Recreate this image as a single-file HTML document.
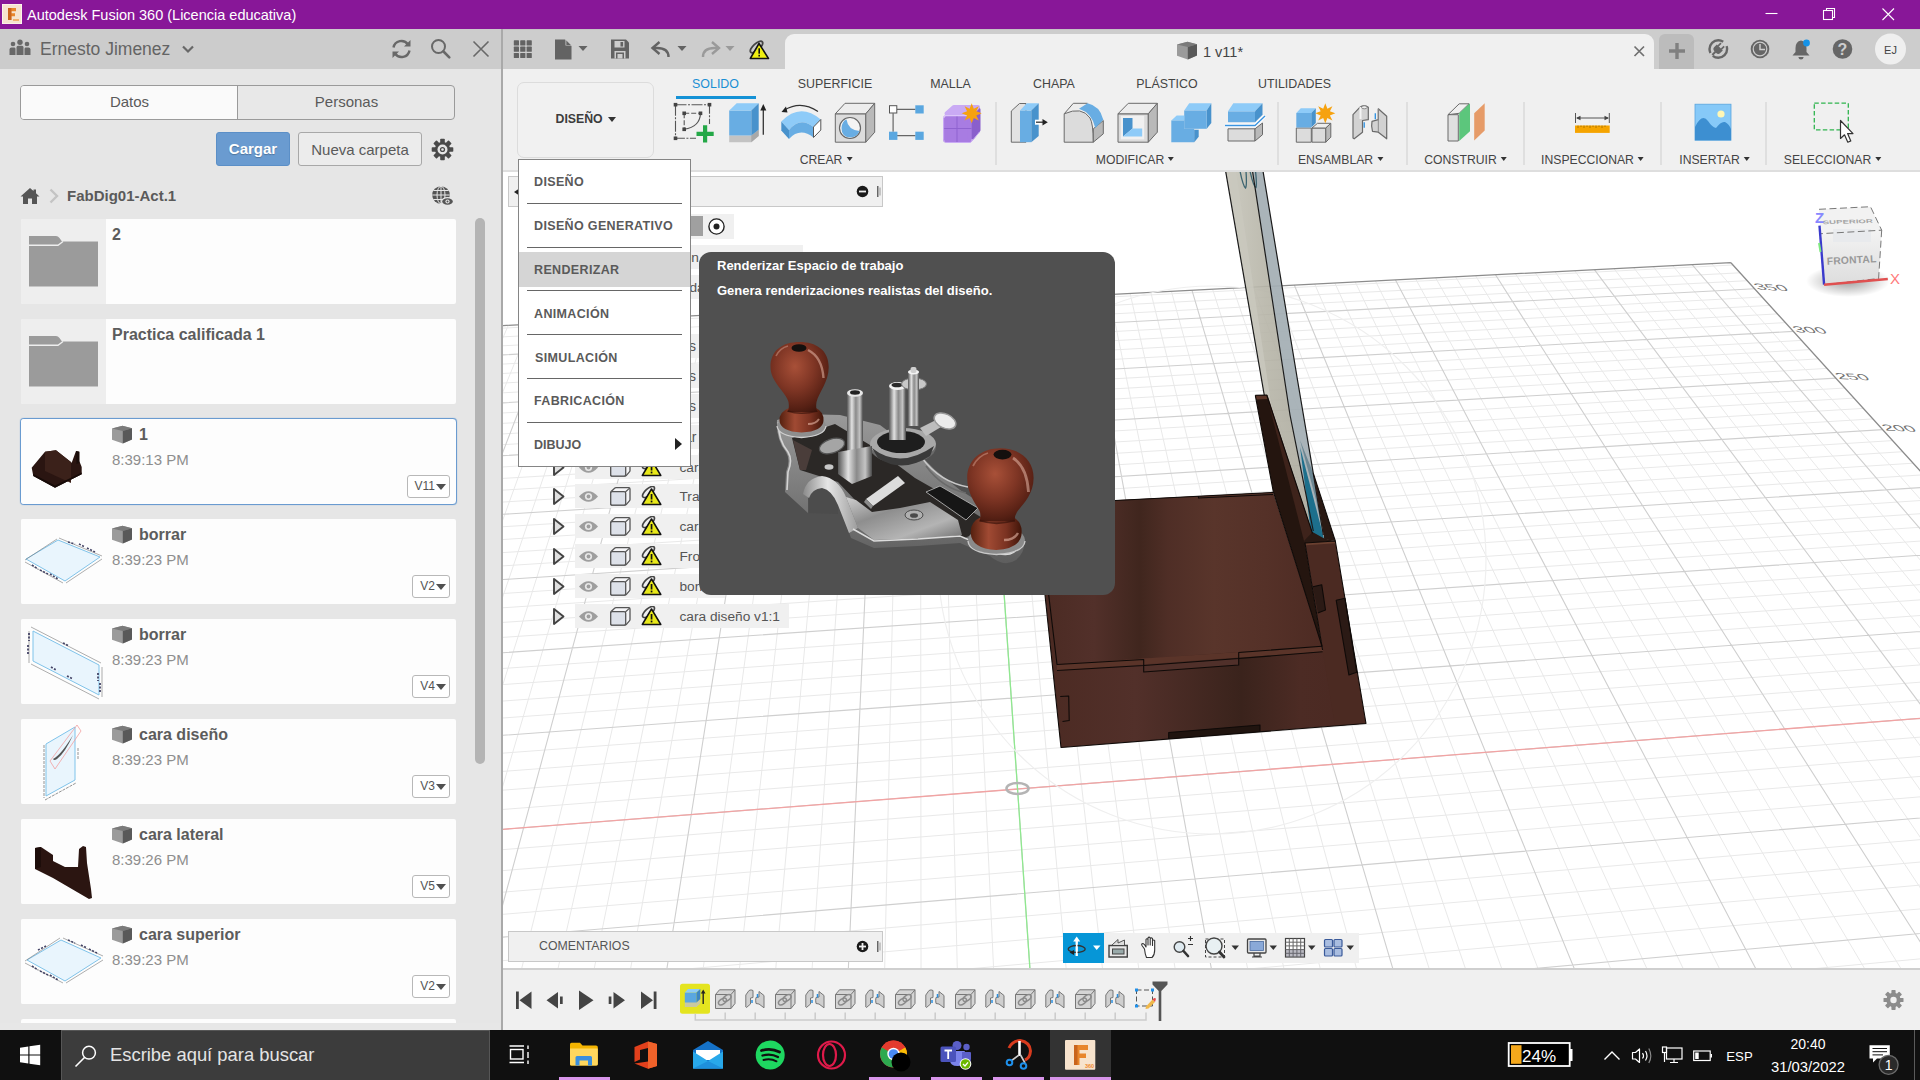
<!DOCTYPE html>
<html><head><meta charset="utf-8"><title>Autodesk Fusion 360</title>
<style>
*{box-sizing:border-box;margin:0;padding:0}
html,body{width:1920px;height:1080px;overflow:hidden;background:#fff;font-family:"Liberation Sans",sans-serif;}
.abs{position:absolute}
#root{position:relative;width:1920px;height:1080px;overflow:hidden;background:#fff}
.cx{display:inline-block;transform-origin:left center;white-space:nowrap}
/* title bar */
#title{left:0;top:0;width:1920px;height:29px;background:#881798;color:#fff}
#title .t{left:27px;top:6.500px;font-size:14.5px;white-space:nowrap;letter-spacing:0px}
/* left panel */
#lp{left:0;top:29px;width:503px;height:1001px;background:#e6e6e6;overflow:hidden}
#lph{left:0;top:0;width:501px;height:40px;background:#cccccc}
#lph .n{left:40px;top:10px;font-size:17.5px;color:#646464;white-space:nowrap}
#tabs{left:20px;top:56px;width:435px;height:35px;border:1px solid #9a9a9a;border-radius:4px;background:#e8e8e8;overflow:hidden}
#tabs .a{left:0;top:0;width:217px;height:33px;background:#fafafa;border-right:1px solid #9a9a9a}
#tabs span{position:absolute;top:7px;font-size:15px;color:#5a5a5a;text-align:center}
#bcarg{left:216px;top:103px;width:74px;height:34px;background:#6a9bd0;border:1px solid #5b8fc7;border-radius:3px;color:#fff;font-weight:bold;font-size:15px;text-align:center;line-height:32px;text-shadow:0 1px 1px rgba(0,0,0,.25)}
#bnew{left:298px;top:103px;width:124px;height:34px;background:#ececec;border:1px solid #a8a8a8;border-radius:3px;color:#5a5a5a;font-size:15px;text-align:center;line-height:33px}
#bc{left:67px;top:158px;font-size:15px;font-weight:bold;color:#5a5a5a;white-space:nowrap}
.it{position:absolute;left:21px;width:435px;height:85px;background:#fdfdfd;border-radius:2px;overflow:hidden}
.it .th{position:absolute;left:0;top:0;width:85px;height:85px;background:#fdfdfd}
.it.f .th{background:#eeeeee}
.it .nm{position:absolute;left:91px;top:7px;font-size:16px;font-weight:bold;color:#5c5c5c;white-space:nowrap}
.it .nm.c{left:118px}
.it .tm{position:absolute;left:91px;top:32px;font-size:15px;color:#8e8e8e;white-space:nowrap}
.it .v{position:absolute;right:6px;top:56px;height:23px;border:1px solid #b8b8b8;border-radius:3px;background:#fff;font-size:12px;color:#555;line-height:21px;padding:0 14px 0 7px}
.it .v:after{content:"";position:absolute;right:3px;top:8px;border-left:5px solid transparent;border-right:5px solid transparent;border-top:6.500px solid #505050}
.it .ci{position:absolute;left:90px;top:6px}
.it.sel{left:20px;width:437px;height:87px;border:1px solid #6a9bd0;border-radius:4px;box-shadow:0 0 1px #6a9bd0;background:#fdfdfd}
/* top strip */
#ts{left:503px;top:29px;width:1417px;height:40px;background:#cdcdcd}
#doctab{left:785px;top:34px;width:869px;height:35px;background:#f0f0f0;border-radius:9px 9px 0 0}
#rib{left:503px;top:69px;width:1417px;height:103px;background:#f0f0f0;border-bottom:2px solid #dedede}
.rt{position:absolute;top:76.500px;font-size:12.400px;color:#444;white-space:nowrap;transform:translateX(-50%)}
.rl{position:absolute;top:153px;font-size:12.200px;color:#444;white-space:nowrap;transform:translateX(-50%)}
.rl:after{content:"";display:inline-block;margin-left:4px;vertical-align:3px;border-left:3.5px solid transparent;border-right:3.5px solid transparent;border-top:4.5px solid #333}
.rs{position:absolute;top:102px;width:2px;height:63px;background:#dfdfdf}
#canvas{left:503px;top:172px;width:1417px;height:796px;background:#fff;overflow:hidden}
#tl{left:503px;top:968px;width:1417px;height:62px;background:#f0f0f0;border-top:2px solid #cfcfcf}
#tb{left:0;top:1030px;width:1920px;height:50px;background:#101010}
.mi{position:absolute;left:534px;height:16px;margin-top:-7.500px;line-height:16px;font-size:12.500px;font-weight:bold;color:#5a5a5a;white-space:nowrap;letter-spacing:.35px}
.ms{position:absolute;left:527px;width:155px;height:1px;background:#666}
</style></head><body><div id="root">
<!-- TITLE BAR -->
<div id="title" class="abs">
  <svg class="abs" style="left:2px;top:4px" width="20" height="20" viewBox="0 0 20 20"><rect x="0" y="0" width="20" height="20" rx="1" fill="#f6e3cf"/><rect x="0" y="0" width="20" height="20" rx="1" fill="none" stroke="#fff" stroke-width="1.2"/><path d="M6 4 H14 V7.2 H9.4 V9.3 H13 V12.2 H9.4 V16 H6 Z" fill="#e8862c"/><path d="M6 4 H9.4 V16 H6Z" fill="#c9641c"/><rect x="11" y="15" width="6" height="2" fill="#f0b070"/></svg>
  <div class="abs t">Autodesk Fusion 360 (Licencia educativa)</div>
  <svg class="abs" style="left:1750px;top:0" width="170" height="29" viewBox="0 0 170 29"><g stroke="#fff" stroke-width="1.1" fill="none"><path d="M15.500 13.500H27.500"/><rect x="73.500" y="10.500" width="9" height="9"/><path d="M76.500 10.500V8.500H84.500V17.500H82.500"/><path d="M132.500 8.500L144 20M144 8.500L132.500 20"/></g></svg>
</div>
<!-- LEFT PANEL -->
<div id="lp" class="abs">
  <div id="lph" class="abs">
    <svg class="abs" style="left:9px;top:10px" width="22" height="18" viewBox="0 0 22 18"><g fill="#686868"><circle cx="4" cy="5" r="2.300"/><circle cx="11" cy="3.200" r="2.700"/><circle cx="18" cy="5" r="2.300"/><path d="M0.500 16V10.500Q0.500 8.500 2.500 8.500H5.500Q6.500 8.500 6.500 10V16Z"/><path d="M7.500 16V8.500Q7.500 6.800 9 6.800H13Q14.500 6.800 14.500 8.500V16Z"/><path d="M15.500 16V10Q15.500 8.500 16.500 8.500H19.500Q21.500 8.500 21.500 10.500V16Z"/></g></svg>
    <div class="abs n">Ernesto Jimenez</div>
    <svg class="abs" style="left:181px;top:14px" width="14" height="12" viewBox="0 0 14 12"><path d="M2 3.500L7 8.500L12 3.500" fill="none" stroke="#686868" stroke-width="2.200"/></svg>
    <svg class="abs" style="left:390px;top:9px" width="23" height="22" viewBox="0 0 23 22"><g fill="none" stroke="#686868" stroke-width="2.400"><path d="M3.500 9.500A8 8 0 0 1 18 6.500"/><path d="M19.500 12.500A8 8 0 0 1 5 15.500"/></g><path d="M20.500 2V8.500H14Z" fill="#686868"/><path d="M2.500 20V13.500H9Z" fill="#686868"/></svg>
    <svg class="abs" style="left:429px;top:8px" width="24" height="24" viewBox="0 0 24 24"><circle cx="9.500" cy="9.500" r="6.500" fill="none" stroke="#686868" stroke-width="2"/><path d="M14.500 14.500L20.300 20.300" stroke="#686868" stroke-width="2.600" stroke-linecap="round"/></svg>
    <svg class="abs" style="left:472px;top:11px" width="18" height="18" viewBox="0 0 18 18"><path d="M1.500 1.500L16.500 16.500M16.500 1.500L1.500 16.500" stroke="#686868" stroke-width="1.600"/></svg>
  </div>
  <div id="tabs" class="abs"><div class="abs a"></div><span style="left:0;width:217px">Datos</span><span style="left:217px;width:217px">Personas</span></div>
  <div id="bcarg" class="abs">Cargar</div>
  <div id="bnew" class="abs">Nueva carpeta</div>
  <!-- gear -->
  <svg class="abs" style="left:431px;top:109px" width="23" height="23" viewBox="-11.500 -11.500 23 23"><g fill="#4a4a4a"><circle r="7.600"/><g id="gt"><rect x="-2.300" y="-10.800" width="4.600" height="5" rx="0.800"/></g><use href="#gt" transform="rotate(45)"/><use href="#gt" transform="rotate(90)"/><use href="#gt" transform="rotate(135)"/><use href="#gt" transform="rotate(180)"/><use href="#gt" transform="rotate(225)"/><use href="#gt" transform="rotate(270)"/><use href="#gt" transform="rotate(315)"/></g><circle r="5" fill="#e6e6e6"/><circle r="2.600" fill="#4a4a4a"/><circle r="1.300" fill="#e6e6e6"/></svg>
  <!-- breadcrumb -->
  <svg class="abs" style="left:20px;top:158px" width="20" height="18" viewBox="0 0 20 18"><path d="M10 1L0.500 9.500H3V17H8V11.500H12V17H17V9.500H19.500L16 6.300V2.500H13.500V4.100Z" fill="#555"/></svg>
  <svg class="abs" style="left:48px;top:159px" width="12" height="16" viewBox="0 0 12 16"><path d="M2.500 1.500L9 8L2.500 14.500" fill="none" stroke="#c4c4c4" stroke-width="2.400"/></svg>
  <div id="bc" class="abs">FabDig01-Act.1</div>
  <svg class="abs" style="left:431px;top:156px" width="24" height="22" viewBox="0 0 24 22"><circle cx="10" cy="10" r="8.800" fill="#555"/><g stroke="#e6e6e6" stroke-width="1" fill="none"><ellipse cx="10" cy="10" rx="4" ry="8.800"/><path d="M10 1V19M1.200 10H18.800M2.500 5.500H17.500M2.500 14.500H17.500"/></g><ellipse cx="16.500" cy="16.500" rx="6.500" ry="4.500" fill="#e6e6e6"/><ellipse cx="16.500" cy="16.500" rx="5.300" ry="3.300" fill="#555"/><circle cx="16.500" cy="16.500" r="2.100" fill="#e6e6e6"/><circle cx="16.500" cy="16.500" r="1" fill="#555"/></svg>
  <!-- LIST -->
  <svg width="0" height="0" style="position:absolute"><defs>
    <g id="cube"><path d="M1 3.500L11.500 0.800L21 3.200V14.500L11.800 18.500L1 14.800Z" fill="#9b9b9b"/><path d="M1 3.500L11.500 0.800L21 3.200L11.800 6Z" fill="#7a7a7a"/><path d="M11.800 6L21 3.200V14.500L11.800 18.500Z" fill="#595959"/></g>
    <g id="folder"><path d="M0 0H27Q29 0 30.500 2L33 5.500H69V50.500H0Z" fill="#9b9b9b"/><path d="M0 9.300H29L34 5.500" fill="none" stroke="#eeeeee" stroke-width="1.400"/></g>
  </defs></svg>
  <div class="it f" style="top:190px"><div class="th"><svg class="abs" style="left:8px;top:17px" width="70" height="52"><use href="#folder"/></svg></div><div class="nm">2</div></div>
  <div class="it f" style="top:290px"><div class="th"><svg class="abs" style="left:8px;top:17px" width="70" height="52"><use href="#folder"/></svg></div><div class="nm">Practica calificada 1</div></div>
  <div class="it sel" style="top:389px"><div class="th">
     <svg class="abs" style="left:8px;top:28px" width="60" height="44" viewBox="29 446 60 44"><path d="M31.700 466.700L45 450.700L56 449.300L71.700 461.700L76 450L79.300 450.700V460L81.700 466V473.300L55 486.700L33.300 475Z" fill="#2a1511"/><path d="M45 450.700L56 449.300L71 461V482L45 470Z" fill="#3b211a"/><path d="M33.300 473L55 484.500L81.700 471.500V473.300L55 486.700L33.300 475Z" fill="#170b08"/><path d="M76 450L79.300 450.700V462L76.500 463Z" fill="#1a0d0a"/></svg>
  </div><svg class="ci" width="22" height="20"><use href="#cube"/></svg><div class="nm c">1</div><div class="tm">8:39:13 PM</div><div class="v">V11</div></div>
  <div class="it" style="top:490px"><div class="th">
     <svg class="abs" style="left:3px;top:18px" width="80" height="48" viewBox="0 0 80 48"><path d="M2 22L34 3L76 20L41 44Z" fill="#e9f5fd" stroke="#7fc3ea" stroke-width="1"/><path d="M1 23L33 2M35 1L78 19M78 22L42 46M39 46L1 25" stroke="#777" stroke-width="0.600" fill="none"/><path d="M8 28l6 4M16 33l8 4M26 37l8 5M55 7l6 3M63 11l8 4M44 5l7 2" stroke="#446" stroke-width="1.600" stroke-dasharray="2 1.500"/></svg>
  </div><svg class="ci" width="22" height="20"><use href="#cube"/></svg><div class="nm c">borrar</div><div class="tm">8:39:23 PM</div><div class="v">V2</div></div>
  <div class="it" style="top:590px"><div class="th">
     <svg class="abs" style="left:2px;top:4px" width="80" height="78" viewBox="0 0 80 78"><path d="M10 8L76 42V72L10 38Z" fill="#e9f5fd" stroke="#7fc3ea" stroke-width="1"/><path d="M8 4L78 40M6 8V40M8 41L76 76M79 44V74" stroke="#777" stroke-width="0.600" fill="none"/><path d="M6 10v8M5 22v10M75 50v8M77 60v10M40 20l6 3M28 44l5 3M44 53l6 3" stroke="#446" stroke-width="1.800" stroke-dasharray="2 1.500"/></svg>
  </div><svg class="ci" width="22" height="20"><use href="#cube"/></svg><div class="nm c">borrar</div><div class="tm">8:39:23 PM</div><div class="v">V4</div></div>
  <div class="it" style="top:690px"><div class="th">
     <svg class="abs" style="left:20px;top:4px" width="44" height="78" viewBox="0 0 44 78"><path d="M5 21L34 4V57L5 73Z" fill="#e9f5fd" stroke="#7fc3ea" stroke-width="1"/><path d="M9 38L36 2L40 8L14 46Z" fill="none" stroke="#f3a0a0" stroke-width="0.800"/><path d="M12 36Q20 32 32 12Q24 30 16 36Q13 38 12 36Z" fill="#555"/><path d="M3 22V75M4 77L35 60M37 25V36" stroke="#666" stroke-width="0.700" stroke-dasharray="3 1"/></svg>
  </div><svg class="ci" width="22" height="20"><use href="#cube"/></svg><div class="nm c">cara diseño</div><div class="tm">8:39:23 PM</div><div class="v">V3</div></div>
  <div class="it" style="top:790px"><div class="th">
     <svg class="abs" style="left:12px;top:26px" width="62" height="56" viewBox="0 0 62 56"><path d="M2 3L8 2L20 10V16L32 22L45 22L46 4L50 1L53 2L54 18L58 44L59 53L56 54L32 40L20 33L2 24Z" fill="#2b1511"/><path d="M2 3L8 2V22L2 24Z" fill="#1d0d0a"/></svg>
  </div><svg class="ci" width="22" height="20"><use href="#cube"/></svg><div class="nm c">cara lateral</div><div class="tm">8:39:26 PM</div><div class="v">V5</div></div>
  <div class="it" style="top:890px"><div class="th">
     <svg class="abs" style="left:3px;top:18px" width="80" height="48" viewBox="0 0 80 48"><path d="M3 23L37 3L77 21L41 44Z" fill="#e9f5fd" stroke="#7fc3ea" stroke-width="1"/><path d="M1 24L36 1M39 1L79 19M79 23L42 46M39 46L1 26" stroke="#777" stroke-width="0.600" fill="none"/><path d="M8 29l6 4M16 34l8 4M26 38l8 5M57 8l6 3M65 12l8 4M44 3l7 3M14 13l8-4" stroke="#446" stroke-width="1.600" stroke-dasharray="2 1.500"/></svg>
  </div><svg class="ci" width="22" height="20"><use href="#cube"/></svg><div class="nm c">cara superior</div><div class="tm">8:39:23 PM</div><div class="v">V2</div></div>
  <div class="it" style="top:989.500px;height:4px;border-radius:2px 2px 0 0"></div>
  <div class="abs" style="left:0;top:993.500px;width:500px;height:8px;background:#e7e7e7"></div>
  <!-- scrollbar -->
  <div class="abs" style="left:475px;top:189px;width:10px;height:546px;background:#b4b4b4;border-radius:5px"></div>
  <div class="abs" style="left:501px;top:0;width:2px;height:1001px;background:#a9a9a9"></div>
</div>

<!-- TOP STRIP -->
<div id="ts" class="abs"></div>
<div class="abs" style="left:503px;top:29px;width:1417px;height:1px;background:#c4c4c4"></div>
<svg class="abs" style="left:504px;top:29px" width="290" height="40" viewBox="504 29 290 40">
  <g fill="#636363">
    <g id="g9"><rect x="513.800" y="40.300" width="5.200" height="5.200" rx=".6"/><rect x="520.200" y="40.300" width="5.200" height="5.200" rx=".6"/><rect x="526.600" y="40.300" width="5.200" height="5.200" rx=".6"/></g>
    <use href="#g9" y="6.300"/><use href="#g9" y="12.600"/>
    <!-- file -->
    <path d="M555 39.500H565L571.500 46V59.500H555Z"/><path d="M565.500 39.500V45.500H571.500Z" fill="#cdcdcd"/><path d="M566.300 40.500L570.800 45H566.300Z" fill="#636363"/>
    <path d="M578.500 46H587.500L583 51Z"/>
    <!-- save -->
    <path d="M611 39.500H626L629 42.500V58.500H611Z"/><rect x="614.500" y="41" width="10" height="6.500" fill="#cdcdcd"/><rect x="620.500" y="42" width="2.600" height="4.500" fill="#636363"/><rect x="614.500" y="51" width="11" height="7.500" fill="#cdcdcd"/><rect x="616" y="52.500" width="8" height="6" fill="#636363"/><rect x="617.500" y="54" width="5" height="4.500" fill="#cdcdcd"/>
    <!-- undo caret -->
    <path d="M677.500 46H686.500L682 51Z"/>
    <path d="M725.500 46H734.500L730 51Z" fill="#9a9a9a"/>
  </g>
  <!-- undo -->
  <path d="M668.500 57Q668.500 48 657 48H654" fill="none" stroke="#636363" stroke-width="2.400"/><path d="M659.500 42L652.500 48L659.500 54" fill="none" stroke="#636363" stroke-width="2.400"/>
  <!-- redo -->
  <path d="M703 57Q703 48 714.500 48H717.500" fill="none" stroke="#9a9a9a" stroke-width="2.400"/><path d="M712 42L719 48L712 54" fill="none" stroke="#9a9a9a" stroke-width="2.400"/>
  <!-- warning -->
  <ellipse cx="756.500" cy="47" rx="7.800" ry="3.300" transform="rotate(-42 756.500 47)" fill="none" stroke="#444" stroke-width="1.800"/>
  <path d="M759 43.500L768.500 58.500H750.300Z" fill="#eeee10" stroke="#111" stroke-width="1.500" stroke-linejoin="round"/><rect x="758.400" y="48.300" width="1.600" height="5.400" fill="#111"/><rect x="758.400" y="54.800" width="1.600" height="1.700" fill="#111"/>
</svg>
<div id="doctab" class="abs"></div>
<svg class="abs" style="left:1176px;top:41px" width="22" height="20"><use href="#cube"/></svg>
<div class="abs" style="left:1203px;top:44px;font-size:14.5px;color:#444;white-space:nowrap">1 v11*</div>
<svg class="abs" style="left:1633px;top:45px" width="13" height="13" viewBox="0 0 13 13"><path d="M1.500 1.500L11 11M11 1.500L1.500 11" stroke="#707070" stroke-width="1.700"/></svg>
<div class="abs" style="left:1659px;top:34px;width:35px;height:35px;background:#bcbcbc;border-radius:6px 6px 0 0"></div>
<svg class="abs" style="left:1659px;top:29px" width="261" height="40" viewBox="1659 29 261 40">
  <path d="M1677 43V59M1669 51H1685" stroke="#808080" stroke-width="3.400"/>
  <!-- extensions -->
  <circle cx="1718.300" cy="49" r="8.800" fill="none" stroke="#666" stroke-width="2.400" stroke-dasharray="19.660 3.690 23.040 5.530 3.380 0"/>
  <g transform="translate(1718.300 49) rotate(45)" fill="#666"><path d="M-4.200 -2.200H4.200V1.500Q4.200 4.300 1 4.300H-1Q-4.200 4.300 -4.200 1.500Z"/><rect x="-3.100" y="-6" width="1.700" height="4.200"/><rect x="1.400" y="-6" width="1.700" height="4.200"/><rect x="-1" y="4" width="2" height="4.500"/></g>
  <!-- clock -->
  <circle cx="1760" cy="49" r="9.300" fill="#666"/><circle cx="1760" cy="49" r="6.800" fill="none" stroke="#cdcdcd" stroke-width="1.200"/><path d="M1760 44V49.500H1765" stroke="#cdcdcd" stroke-width="1.500" fill="none"/>
  <!-- bell -->
  <path d="M1801 40.500Q1795.500 41.500 1795.500 48V52L1792.500 55.500H1809.500L1806.500 52V48Q1806.500 41.500 1801 40.500Z" fill="#666"/><path d="M1798.300 57H1803.700Q1803.300 59.600 1801 59.600Q1798.700 59.600 1798.300 57Z" fill="#666"/><circle cx="1806.500" cy="43" r="3.400" fill="#1592e6"/>
  <!-- help -->
  <circle cx="1842.500" cy="49" r="9.800" fill="#666"/><text x="1842.500" y="55" font-family="Liberation Sans" font-weight="bold" font-size="16" fill="#cdcdcd" text-anchor="middle">?</text>
  <!-- avatar -->
  <circle cx="1890.500" cy="49" r="15.500" fill="#efefef"/><text x="1890.500" y="53.500" font-family="Liberation Sans" font-size="11" fill="#444" text-anchor="middle">EJ</text>
</svg>
<!-- RIBBON -->
<div id="rib" class="abs"></div>
<div class="abs" style="left:517px;top:82px;width:137px;height:76px;border:1px solid #dcdcdc;border-radius:7px;background:#f1f1f1"></div>
<div class="abs" style="left:555.500px;top:112px;font-size:12.300px;font-weight:bold;color:#3c3c3c;white-space:nowrap">DISEÑO</div>
<div class="abs" style="left:608px;top:117px;border-left:4px solid transparent;border-right:4px solid transparent;border-top:5px solid #333"></div>
<div class="rt" style="left:715.500px;color:#1a8fd4">SOLIDO</div>
<div class="abs" style="left:676px;top:96px;width:80px;height:3px;background:#1592d6"></div>
<div class="rt" style="left:835px">SUPERFICIE</div>
<div class="rt" style="left:950.500px">MALLA</div>
<div class="rt" style="left:1054px">CHAPA</div>
<div class="rt" style="left:1167px">PLÁSTICO</div>
<div class="rt" style="left:1294.500px">UTILIDADES</div>
<div class="rl" style="left:826px">CREAR</div>
<div class="rl" style="left:1135px">MODIFICAR</div>
<div class="rl" style="left:1340.500px">ENSAMBLAR</div>
<div class="rl" style="left:1465.500px">CONSTRUIR</div>
<div class="rl" style="left:1592.500px">INSPECCIONAR</div>
<div class="rl" style="left:1714.500px">INSERTAR</div>
<div class="rl" style="left:1832.500px">SELECCIONAR</div>
<div class="rs" style="left:995px"></div><div class="rs" style="left:1277px"></div><div class="rs" style="left:1406px"></div><div class="rs" style="left:1523px"></div><div class="rs" style="left:1660px"></div><div class="rs" style="left:1765px"></div>
<svg class="abs" style="left:660px;top:98px" width="1260" height="50" viewBox="660 98 1260 50">
<defs>
  <path id="star" d="M0-10L2.100-4.600L7.100-7.100L4.600-2.100L10 0L4.600 2.100L7.100 7.100L2.100 4.600L0 10L-2.100 4.600L-7.100 7.100L-4.600 2.100L-10 0L-4.600-2.100L-7.100-7.100L-2.100-4.600Z" fill="#f6a20f"/>
</defs>
<!-- 1 sketch -->
<g stroke="#555" stroke-width="1.100" fill="none"><path d="M675.500 104.700H709.500V124M675.500 104.700V138.300H696" stroke-dasharray="11 1.500 2 1.500"/><path d="M684.200 113.300H700.500M684.200 113.300V129.300" stroke-dasharray="5 2"/><path d="M700.500 113.300Q700 127 684.200 129.300"/></g>
<g fill="#444"><rect x="673.700" y="102.900" width="3.600" height="3.600"/><rect x="707.700" y="102.900" width="3.600" height="3.600"/><rect x="673.700" y="136.500" width="3.600" height="3.600"/><rect x="682.400" y="111.500" width="3.600" height="3.600"/><rect x="698.700" y="111.500" width="3.600" height="3.600"/><rect x="682.400" y="127.500" width="3.600" height="3.600"/></g>
<path d="M703 125.200H707.200V131.700H713.700V135.900H707.200V142.400H703V135.900H696.500V131.700H703Z" fill="#24a847"/>
<!-- 2 extrude -->
<path d="M729.200 135.500H751.300L758.700 129.700V136L751.300 142.200H729.200Z" fill="#c3c3c3"/><path d="M751.300 135.500L758.700 129.700V136L751.300 142.200Z" fill="#a8a8a8"/>
<path d="M729.200 110.500H751.300V135.500H729.200Z" fill="#68ade3"/><path d="M729.200 110.500L736.700 103.300H758.700L751.300 110.500Z" fill="#8ecbf8"/><path d="M751.300 110.500L758.700 103.300V129.700L751.300 135.500Z" fill="#4892cc"/>
<path d="M763.300 108V134.700" stroke="#333" stroke-width="1.300"/><path d="M763.300 104L766.300 110.500H760.300Z" fill="#222"/>
<!-- 3 revolve -->
<path d="M781.300 121.500Q800 102 820.800 119.500L813.500 127Q800 116 789 130Z" fill="#8ecbf8"/>
<path d="M781.300 121.500L789 130V139L781.300 130.500Z" fill="#4892cc"/>
<path d="M789 130Q800 116 813.500 127V137.500Q800 127 789 139Z" fill="#68ade3"/>
<path d="M813.500 127L820.800 119.500V130L813.500 137.500Z" fill="#fff" stroke="#555" stroke-width="1"/>
<path d="M818 111.500Q801 100 784.500 110" fill="none" stroke="#333" stroke-width="1.200"/><path d="M781.500 112L786 106.500L787.500 112.500Z" fill="#222"/>
<!-- 4 hole -->
<path d="M835.300 113.800H865.800V142.200H835.300Z" fill="#dcdcdc" stroke="#6a6a6a" stroke-width="1"/><path d="M835.300 113.800L845 103.300H874.700L865.800 113.800Z" fill="#ededed" stroke="#6a6a6a" stroke-width="1"/><path d="M865.800 113.800L874.700 103.300V132.200L865.800 142.200Z" fill="#b9b9b9" stroke="#6a6a6a" stroke-width="1"/>
<circle cx="850" cy="128" r="10.500" fill="#f4f4f4" stroke="#666" stroke-width="1.200"/><path d="M846.500 119.500Q848 130 859.500 131Q857 137.500 850 137.500Q841.500 137 841.500 128Q842 121 846.500 119.500Z" fill="#68ade3"/>
<!-- 5 pattern -->
<path d="M897 109.300H915.500M893.100 113.300V131.700M897 135.700H915.500" stroke="#666" stroke-width="1.200"/>
<rect x="889.500" y="105.700" width="7.300" height="7.300" fill="#fff" stroke="#555" stroke-width="1"/><rect x="915.300" y="105.300" width="8.400" height="8.200" fill="#5aa7e0"/><rect x="889" y="131.700" width="8.400" height="8.200" fill="#5aa7e0"/><rect x="915.300" y="131.700" width="8.400" height="8.200" fill="#5aa7e0"/>
<!-- 6 form -->
<g stroke-linejoin="round" stroke-width="4">
<path d="M972.500 116.700L978.500 109.500V130L972.500 137.500Z" fill="#8a5fcc" stroke="#8a5fcc"/>
<path d="M946.500 113.500L953.800 107H978L971.500 113.500Z" fill="#c9aaf4" stroke="#c9aaf4"/>
<path d="M945.300 117.500H969.700V140.500H945.300Z" fill="#a87ce2" stroke="#a87ce2"/>
</g>
<path d="M943.500 128.500H971.500M957 115.500V142.300" stroke="#8f63d0" stroke-width="1"/>
<path d="M943.800 118Q943.800 116 946 115.700H969.500Q971.500 116 971.600 118" fill="none" stroke="#dcc6fa" stroke-width="1.200"/>
<path d="M945.500 142.300Q944 141.800 943.600 139.500V118" fill="none" stroke="#c9aaf4" stroke-width="1"/>
<path d="M946 142.500H969.500Q971.300 142.300 972 141L979.500 132" fill="none" stroke="#c9aaf4" stroke-width="1"/>
<use href="#star" transform="translate(971.700 113.300)"/>
<!-- 7 press pull -->
<path d="M1011.300 142.200V111L1019.500 103.500H1026V142.200Z" fill="#e2e2e2" stroke="#6a6a6a" stroke-width="1"/>
<path d="M1020 110.500H1031.300V142.200H1020Z" fill="#68ade3"/><path d="M1020 110.500L1026.700 103.300H1038.700L1031.300 110.500Z" fill="#8ecbf8"/><path d="M1031.300 110.500L1038.700 103.300V136L1031.300 142.200Z" fill="#4892cc"/>
<rect x="1035" y="119.700" width="6" height="5" fill="#fff"/><path d="M1036 122.200H1044" stroke="#333" stroke-width="1.300"/><path d="M1047.800 122.200L1042.500 119V125.400Z" fill="#222"/>
<!-- 8 fillet -->
<path d="M1064.200 113.800L1073.300 103.300H1087.500L1079 109Z" fill="#ededed"/><path d="M1064.200 113.800L1073.300 103.300H1087.500" fill="none" stroke="#6a6a6a" stroke-width="1"/>
<path d="M1064.200 142.200V113.800Q1082 106 1090 118Q1093.300 124 1093.300 142.200Z" fill="#dcdcdc" stroke="#6a6a6a" stroke-width="1"/>
<path d="M1093.300 128.800L1103.300 120.500V133.800L1093.300 142.200Z" fill="#b9b9b9" stroke="#6a6a6a" stroke-width="1"/>
<path d="M1079 108.800L1087.500 103.300Q1100 106 1103.300 119.700L1095.300 128Q1092 113 1079 108.800Z" fill="#68ade3"/>
<!-- 9 shell -->
<path d="M1118 113.800H1148.300V142.200H1118Z" fill="#dcdcdc" stroke="#6a6a6a" stroke-width="1"/><path d="M1118 113.800L1128.300 103.300H1157.300L1148.300 113.800Z" fill="#ededed" stroke="#6a6a6a" stroke-width="1"/><path d="M1148.300 113.800L1157.300 103.300V132.200L1148.300 142.200Z" fill="#b9b9b9" stroke="#6a6a6a" stroke-width="1"/>
<rect x="1120.800" y="115.800" width="23.400" height="23.600" fill="#f1f1f1"/><path d="M1123 118H1132.500V128.500L1123 136.500Z" fill="#4892cc"/><path d="M1132.500 128.500H1142.200V136.500H1123Z" fill="#8ecbf8"/>
<!-- 10 combine -->
<path d="M1184.200 110.500L1189.200 103.300H1211.300L1206.700 110.500Z" fill="#8ecbf8"/><path d="M1206.700 110.500L1211.300 103.300V123L1206.700 128.800Z" fill="#4892cc"/><path d="M1184.200 110.500H1206.700V128.800H1184.200Z" fill="#68ade3"/>
<path d="M1171.300 120.500L1176.700 115.500H1184.200V120.500Z" fill="#8ecbf8"/><path d="M1171.300 120.500H1184.200V128.800H1194.200V142.200H1171.300Z" fill="#68ade3"/><path d="M1194.200 129.700H1198.700V136.700L1194.200 142.200Z" fill="#4892cc"/>
<!-- 11 offset face -->
<path d="M1228 128.800H1255V141H1228Z" fill="#dcdcdc" stroke="#6a6a6a" stroke-width="1"/><path d="M1255 128.800L1262.500 123V134.700L1255 141Z" fill="#b9b9b9" stroke="#6a6a6a" stroke-width="1"/>
<path d="M1228 111.300H1255V122.200H1228Z" fill="#68ade3"/><path d="M1228 111.300L1233.300 103.300H1262.500L1255 111.300Z" fill="#8ecbf8"/><path d="M1255 111.300L1262.500 103.300V114.700L1255 122.200Z" fill="#4892cc"/>
<path d="M1225 125.500H1255L1265 116" fill="none" stroke="#fff" stroke-width="3.400"/><path d="M1225 125.500H1255L1265 116" fill="none" stroke="#3a94e0" stroke-width="1.300"/>
<!-- 12 new component -->
<path d="M1296.300 128H1311.300V142.200H1296.300Z" fill="#dcdcdc" stroke="#6a6a6a" stroke-width="1"/>
<path d="M1312 128H1325.800V142.200H1312Z" fill="#dcdcdc" stroke="#6a6a6a" stroke-width="1"/><path d="M1312 128L1317.500 123.300H1330.800L1325.800 128Z" fill="#ededed" stroke="#6a6a6a" stroke-width="1"/><path d="M1325.800 128L1330.800 123.300V137.200L1325.800 142.200Z" fill="#b9b9b9" stroke="#6a6a6a" stroke-width="1"/>
<path d="M1296.300 113H1311.300V127.500H1296.300Z" fill="#68ade3"/><path d="M1296.300 113L1300.800 108.300H1315.800L1311.300 113Z" fill="#8ecbf8"/><path d="M1311.300 113L1315.800 108.300V123L1311.300 127.500Z" fill="#4892cc"/>
<use href="#star" transform="translate(1325.300 113.300)"/>
<!-- 13 joint -->
<path d="M1353 138V114.700L1360 107.200Q1364 104.500 1368.300 107.200V119.700L1362.500 120.500V132.200L1354.200 138.800Z" fill="#d2d2d2" stroke="#6a6a6a" stroke-width="1.200" stroke-linejoin="round"/><path d="M1360.500 107V119" stroke="#f4f4f4" stroke-width="2"/><ellipse cx="1364.300" cy="107.300" rx="2.800" ry="1.500" fill="#eee" stroke="#777" stroke-width=".8"/>
<path d="M1378.300 108.800L1386.700 116.300V138.800L1378.300 132.200L1372.500 131.300Q1371 126 1372 121.300L1378.300 119.700Z" fill="#d2d2d2" stroke="#6a6a6a" stroke-width="1.200" stroke-linejoin="round"/><path d="M1378.300 109V132" stroke="#8a8a8a" stroke-width="1"/>
<path d="M1364.200 122.200V127.700M1375.300 113.300V119.300" stroke="#2a8fe0" stroke-width="1.300"/>
<!-- 14 construct -->
<path d="M1448 114.700H1458.300V141H1448Z" fill="#e0e0e0" stroke="#6a6a6a" stroke-width="1"/><path d="M1448 114.700L1459.200 103.800H1469L1459.200 113.300Z" fill="#f0f0f0" stroke="#6a6a6a" stroke-width="1"/>
<path d="M1459.200 113.300L1470 103.300V131.300L1459.200 141Z" fill="#5cc67c"/>
<path d="M1474.200 113.300L1484.700 103.300V130.500L1474.200 140.500Z" fill="#e69b68"/>
<!-- 15 inspect -->
<rect x="1575" y="125.500" width="34.700" height="7.400" fill="#f5a400"/><path d="M1578 125.500V128M1581 125.500V127M1584 125.500V128M1587 125.500V127M1590 125.500V128M1593 125.500V127M1596 125.500V128M1599 125.500V127M1602 125.500V128M1605 125.500V127" stroke="#a06a00" stroke-width=".8"/>
<path d="M1575.500 113V123M1609.300 113V123M1577 118H1608" stroke="#555" stroke-width="1"/><path d="M1576 118L1580.500 115.800V120.200ZM1609 118L1604.500 115.800V120.200Z" fill="#444"/>
<!-- 16 insert -->
<rect x="1695" y="104.200" width="36" height="36" fill="#86c9f8" stroke="#5aa5de" stroke-width=".8"/><path d="M1695 127Q1702 113 1708 121Q1712 127 1716 128Q1721 121 1725 122Q1729 124 1731 129V140.200H1695Z" fill="#3d8fd1"/><circle cx="1721" cy="114" r="3.600" fill="#fff7b5"/>
<!-- 17 select -->
<rect x="1814.300" y="103.200" width="34" height="26.600" fill="none" stroke="#2fb44e" stroke-width="1.300" stroke-dasharray="4.500 2.300"/>
<path d="M1840.500 120.500V138.500L1844.500 134.800L1847.800 142.200L1850.800 140.900L1847.600 133.600H1853Z" fill="#fff" stroke="#333" stroke-width="1.200" stroke-linejoin="round"/>
</svg>
<div id="canvas" class="abs"></div>
<svg class="abs" style="left:503px;top:172px" width="1417" height="796" viewBox="503 172 1417 796">
<g fill="none">
<path d="M-911.2 1815.4L192.5 341.4M-789.6 1800.5L238.3 339.1M-729.4 1793.2L261.1 337.9M-669.6 1785.9L283.8 336.8M-610.1 1778.6L306.5 335.6M-492.2 1764.2L351.8 333.3M-433.7 1757.1L374.3 332.1M-375.7 1750.0L396.8 331.0M-317.9 1742.9L419.2 329.8M-203.5 1729.0L463.9 327.6M-146.7 1722.0L486.1 326.4M-90.4 1715.2L508.3 325.3M-34.3 1708.3L530.5 324.1M76.8 1694.7L574.6 321.9M131.9 1688.0L596.6 320.8M186.7 1681.3L618.6 319.6M241.1 1674.7L640.5 318.5M349.1 1661.5L684.1 316.3M402.6 1655.0L705.9 315.2M455.8 1648.5L727.5 314.1M508.8 1642.0L749.2 312.9M613.7 1629.2L792.3 310.7M665.7 1622.9L813.8 309.6M717.4 1616.5L835.2 308.5M768.9 1610.3L856.6 307.4M870.9 1597.8L899.2 305.3M921.5 1591.6L920.5 304.2M971.8 1585.5L941.6 303.1M1021.8 1579.4L962.8 302.0M1121.0 1567.3L1004.9 299.9M1170.3 1561.3L1025.9 298.8M1219.2 1555.3L1046.8 297.7M1267.9 1549.3L1067.7 296.6M1364.4 1537.6L1109.3 294.5M1412.3 1531.7L1130.1 293.5M1459.9 1525.9L1150.8 292.4M1507.3 1520.1L1171.4 291.3M1601.3 1508.6L1212.6 289.2M1647.9 1503.0L1233.1 288.2M1694.3 1497.3L1253.6 287.1M1740.4 1491.7L1274.0 286.1M1831.9 1480.5L1314.7 284.0M1877.3 1475.0L1334.9 283.0M1922.4 1469.4L1355.2 281.9M1967.3 1464.0L1375.4 280.9M2056.5 1453.1L1415.6 278.8M2100.7 1447.7L1435.6 277.8M2144.7 1442.3L1455.6 276.8M2188.5 1437.0L1475.6 275.8M2275.3 1426.4L1515.4 273.7M2318.4 1421.1L1535.2 272.7M2361.3 1415.9L1555.0 271.7M2403.9 1410.7L1574.7 270.7M2488.6 1400.3L1614.0 268.7M2530.6 1395.2L1633.6 267.7M2572.4 1390.1L1653.2 266.7M2614.0 1385.0L1672.7 265.7M2696.5 1374.9L1711.6 263.7M-972.5 1822.9L2737.5 1369.9M-886.9 1712.0L2669.9 1295.6M-847.0 1660.2L2638.0 1260.5M-808.8 1610.7L2607.2 1226.7M-772.2 1563.2L2577.5 1194.0M-703.5 1474.2L2521.2 1132.0M-671.2 1432.3L2494.4 1102.5M-640.1 1392.0L2468.5 1074.1M-610.3 1353.3L2443.5 1046.5M-553.8 1280.2L2395.7 994.0M-527.2 1245.6L2372.9 968.9M-501.4 1212.3L2350.9 944.6M-476.6 1180.1L2329.4 921.1M-429.5 1119.0L2288.5 876.0M-407.1 1090.0L2268.9 854.4M-385.4 1061.9L2249.8 833.5M-364.4 1034.7L2231.3 813.1M-324.4 982.9L2195.8 774.0M-305.4 958.2L2178.7 755.3M-286.9 934.2L2162.1 737.0M-268.9 910.9L2145.9 719.2M-234.6 866.4L2114.8 685.0M-218.2 845.1L2099.9 668.5M-202.2 824.4L2085.3 652.5M-186.7 804.3L2071.0 636.8M-156.9 765.7L2043.5 606.6M-142.5 747.1L2030.3 592.0M-128.6 729.1L2017.3 577.8M-115.0 711.5L2004.7 563.9M-88.9 677.6L1980.3 537.0M-76.3 661.3L1968.5 524.0M-64.1 645.4L1956.9 511.3M-52.1 629.9L1945.6 498.9M-29.1 600.0L1923.8 474.8M-17.9 585.6L1913.2 463.2M-7.0 571.5L1902.8 451.7M3.6 557.7L1892.6 440.6M24.1 531.1L1873.0 418.9M34.0 518.3L1863.4 408.4M43.7 505.7L1854.0 398.1M53.2 493.4L1844.9 388.0M71.6 469.5L1827.0 368.4M80.5 458.0L1818.4 358.9M89.3 446.7L1809.9 349.6M97.8 435.6L1801.6 340.4M114.4 414.1L1785.4 322.6M122.4 403.7L1777.5 313.9M130.3 393.5L1769.7 305.4M138.0 383.5L1762.1 297.0M153.0 364.1L1747.3 280.7M160.3 354.6L1740.1 272.8M167.4 345.4L1733.0 265.0" stroke="#e9e9e9" stroke-width="1"/>
<path d="M-850.2 1807.9L215.4 340.3M-550.9 1771.4L329.2 334.4M-260.5 1735.9L441.6 328.7M21.4 1701.5L552.6 323.0M295.3 1668.1L662.3 317.4M561.4 1635.6L770.8 311.8M820.0 1604.0L877.9 306.4M1071.6 1573.3L983.9 300.9M1316.3 1543.4L1088.5 295.6M1554.4 1514.4L1192.0 290.3M1786.2 1486.1L1294.3 285.0M2012.0 1458.5L1395.5 279.9M2232.0 1431.6L1495.5 274.7M2446.4 1405.5L1594.4 269.7M2655.4 1380.0L1692.1 264.7M-928.7 1766.1L2703.1 1332.1M-737.1 1517.8L2548.9 1162.4M-581.5 1316.1L2419.2 1019.8M-452.6 1149.0L2308.7 898.2M-344.1 1008.4L2213.3 793.3M-251.5 888.4L2130.2 701.9M-171.6 784.7L2057.1 621.5M-101.8 694.3L1992.4 550.3M-40.4 614.8L1934.6 486.7M14.0 544.3L1882.7 429.6M62.5 481.3L1835.9 378.1M106.2 424.8L1793.4 331.4M145.6 373.7L1754.7 288.8" stroke="#cfcfcf" stroke-width="1.1"/>
<path d="M169.5 342.6L1730.9 262.7M1730.9 262.7L2737.5 1369.9" stroke="#8c8c8c" stroke-width="1.3"/>
<path d="M-251.5 888.4L2130.2 701.9" stroke="#f2a3a3" stroke-width="1.3"/>
<path d="M1071.6 1573.3L983.9 300.9" stroke="#8fe88f" stroke-width="1.3"/>
</g>
<text font-family="Liberation Sans" font-size="12" fill="#5a5a5a" opacity=".85" transform="matrix(1.6 .08 .67 .74 1757.7 289.6)">350</text>
<text font-family="Liberation Sans" font-size="12" fill="#5a5a5a" opacity=".85" transform="matrix(1.6 .08 .67 .74 1796.4 332.2)">300</text>
<text font-family="Liberation Sans" font-size="12" fill="#5a5a5a" opacity=".85" transform="matrix(1.6 .08 .67 .74 1838.9 378.9)">250</text>
<text font-family="Liberation Sans" font-size="12" fill="#5a5a5a" opacity=".85" transform="matrix(1.6 .08 .67 .74 1885.7 430.4)">200</text>
<defs>
<linearGradient id="wood" x1="0" y1="0" x2="1" y2="0"><stop offset="0" stop-color="#4a2a22"/><stop offset=".2" stop-color="#52302a"/><stop offset=".36" stop-color="#40261e"/><stop offset=".46" stop-color="#4f2e26"/><stop offset=".62" stop-color="#59352b"/><stop offset=".8" stop-color="#553128"/><stop offset="1" stop-color="#4d2b23"/></linearGradient>
<linearGradient id="wood2" x1="0" y1="0" x2="1" y2="0"><stop offset="0" stop-color="#4b2a22"/><stop offset=".3" stop-color="#52302a"/><stop offset=".62" stop-color="#3a231c"/><stop offset=".8" stop-color="#4c2b24"/><stop offset="1" stop-color="#4b2922"/></linearGradient>
<linearGradient id="glassb" x1="0" y1="0" x2="1" y2="0"><stop offset="0" stop-color="#c6c5ba"/><stop offset=".45" stop-color="#b7b5a8"/><stop offset="1" stop-color="#aaa89c"/></linearGradient>
</defs>
<circle cx="1212" cy="560" r="274" fill="none" stroke="#efefef" stroke-width="1.200"/>
<!-- glass above -->
<path d="M1225.600 171L1252.500 171L1290 415L1313.300 531L1312.500 533.300L1267.500 395L1264.500 396.500Z" fill="url(#glassb)" fill-opacity=".9"/>
<path d="M1225.600 171L1236 171L1272 410L1264.500 396.500Z" fill="#c9c8be" opacity=".8"/>
<path d="M1252.500 171L1263 171L1297.500 380L1313.300 473.300L1323.300 535L1314 536L1290 415Z" fill="#a3aeb3" fill-opacity=".92"/>
<path d="M1300 446.700L1324.200 539.200L1313 541L1311 533Z" fill="#1d6f8c"/>
<path d="M1300 440L1316 500L1323.500 537L1313.300 473.300Z" fill="#6d8793"/>
<path d="M1240 171Q1243 186 1245.500 188Q1247 186 1246 171M1250 171Q1253.500 187 1256 187.500Q1257 184 1255.500 171" fill="none" stroke="#3c6470" stroke-width="1.300"/>
<g fill="none" stroke="#1a1a1a" stroke-width="1.200"><path d="M1225.600 171L1264.500 396.500"/><path d="M1252.500 171L1290 415L1313.300 531"/><path d="M1263 171L1297.500 380L1313.300 473.300L1323.300 535"/></g>
<!-- box silhouette -->
<path d="M1037 504L1273 492.400L1322 646.300L1322.600 650L1366 723.500L1061 747.500L1045 595Z" fill="url(#wood2)"/>
<path d="M1037 504L1115 500.500L1273 492.400L1322 646.300L1057 664.500L1048.700 595Z" fill="url(#wood)"/>
<!-- right face -->
<path d="M1305 543L1335.300 541L1366 723.500L1335 726L1322.600 650Z" fill="#4b2a22"/>
<!-- inner dark wall -->
<path d="M1255.300 395.300L1266.700 395L1312.500 533.300L1314 541L1305 543L1322.600 650L1321.700 646L1273.300 491.700Z" fill="#24150f"/>
<path d="M1266.700 395L1267.500 395L1312.500 533.300L1311 541L1304 541Z" fill="#3e231b"/>
<path d="M1255.300 395.300L1266.700 395L1268 399L1256.300 399.500Z" fill="#5a3326"/>
<!-- outer dark wall top -->
<path d="M1303.500 541.500L1312.500 532L1324.200 538.500L1335.300 541L1305 543.500Z" fill="#2a1913"/>
<path d="M1305 543L1335.300 541L1335.700 543.200L1305.400 545.200Z" fill="#6a4030"/>
<path d="M1313.300 473.300L1335.300 541L1324.200 539.200Z" fill="#2a1913"/>
<!-- front strip -->
<path d="M1057 664.500L1322 646.300L1322.600 651.800L1057 670.500Z" fill="#5a3429"/>
<path d="M1143.700 665.500L1238.700 658.500V665L1143.700 672Z" fill="#50302a"/>
<!-- slots -->
<path d="M1168.700 739L1260 731.800V725L1168.700 732.500Z" fill="#20140f"/>
<path d="M1336.200 600.300L1345 598.300L1356.700 672.200L1348.900 675Z" fill="#2b1a15"/>
<path d="M1312.900 586.700L1321.700 584.700L1325.500 610L1317.800 612.900Z" fill="#2b1a15"/>
<g fill="none" stroke="#0f0a08" stroke-width="1.100" stroke-linejoin="round">
<path d="M1037 504L1115 500.500L1273 492.400"/>
<path d="M1198.500 496V498L1273 494.500"/>
<path d="M1045 595L1061 747.500L1366 723.500L1335.300 541L1305 543L1322.600 650"/>
<path d="M1048.700 595L1057 664.500L1143.700 659.500V672L1238.700 665V652.500L1322 646.300"/>
<path d="M1057 670.500L1143.700 665.500M1238.700 658.500L1322.600 651.800M1143.700 665.500L1238.700 658.500"/>
<path d="M1255.300 395.300L1273.300 491.700L1322 646.300"/>
<path d="M1255.300 395.300L1266.700 395L1312.500 533.300"/>
<path d="M1313.300 473.300L1335.300 541"/>
<path d="M1060.200 696.500L1068.700 696L1069.200 720.500L1062.500 721.500"/>
<path d="M1336.200 600.300L1345 598.300L1356.700 672.200L1348.900 675Z"/>
<path d="M1312.900 586.700L1321.700 584.700L1325.500 610L1317.800 612.900"/>
<path d="M1168.700 739V732.500L1260 725V731.800"/>
</g>
<!-- origin marker -->
<ellipse cx="1017.500" cy="788.500" rx="11" ry="5.500" fill="none" stroke="#b4b4b4" stroke-width="2.600"/>

</svg>
<!-- BROWSER -->
<svg width="0" height="0" style="position:absolute"><defs>
  <g id="tri"><path d="M2 1L11.500 8.500L2 16Z" fill="#e0e0e0" stroke="#444" stroke-width="1.900" stroke-linejoin="round"/></g>
  <g id="eye"><path d="M0 5.500Q9.500-5 19 5.500Q9.500 16 0 5.500Z" fill="#9e9e9e"/><circle cx="9.500" cy="5.500" r="3.600" fill="#e8e8e8"/><circle cx="9.500" cy="5.500" r="1.900" fill="#9e9e9e"/></g>
  <g id="bx"><path d="M0.700 6Q0.700 5 1.400 4.300L4.600 1.200Q5.200 0.700 6 0.700H18.800Q20 0.700 20 1.900V12.500Q20 13.300 19.400 13.900L16.200 17.600Q15.600 18.200 14.800 18.200H1.900Q0.700 18.200 0.700 17Z" fill="#f6f6f8" stroke="#555" stroke-width="1.300"/><rect x="0.700" y="4.600" width="15" height="13.600" rx="1.600" fill="#dde1e9" stroke="#555" stroke-width="1.300"/><path d="M15.400 5L19.600 1.100" stroke="#555" stroke-width="1.100"/></g>
  <g id="wrn"><ellipse cx="7.500" cy="6" rx="7.500" ry="3.200" transform="rotate(-42 7.500 6)" fill="none" stroke="#444" stroke-width="1.700"/><path d="M10.500 3L19.800 18.500H1.300Z" fill="#e8e81a" stroke="#111" stroke-width="1.500" stroke-linejoin="round"/><rect x="9.700" y="8" width="1.700" height="5.500" fill="#111"/><rect x="9.700" y="14.600" width="1.700" height="1.800" fill="#111"/></g>
</defs></svg>
<div class="abs" style="left:508px;top:176px;width:375px;height:31px;background:#f0f0f0;border:1px solid #c8c8c8"></div>
<div class="abs" style="left:514px;top:188px;border-top:4px solid transparent;border-bottom:4px solid transparent;border-right:6px solid #222"></div>
<svg class="abs" style="left:855px;top:184px" width="30" height="16" viewBox="0 0 30 16"><circle cx="7.500" cy="7.500" r="5.800" fill="#1a1a1a"/><rect x="4" y="6.600" width="7" height="1.800" fill="#f0f0f0"/><path d="M22.800 2V13" stroke="#444" stroke-width="1.200"/><path d="M25 3.500V11.500" stroke="#999" stroke-width="1"/></svg>
<div class="abs" style="left:560px;top:214px;width:174px;height:25px;background:#f0f0f0"></div>
<div class="abs" style="left:660px;top:216px;width:43px;height:20px;background:#a0a0a0"></div>
<svg class="abs" style="left:707px;top:217px" width="19" height="19" viewBox="0 0 19 19"><circle cx="9.500" cy="9.500" r="7.600" fill="#fff" stroke="#222" stroke-width="1.400"/><circle cx="9.500" cy="9.500" r="3" fill="#222"/></svg>
<div class="abs" style="left:575px;top:245px;width:228px;height:24px;background:#f0f0f0"></div>
<div class="abs" style="left:575px;top:275px;width:228px;height:24px;background:#f0f0f0"></div>
<div class="abs" style="left:575px;top:334px;width:150px;height:24px;background:#f0f0f0"></div>
<div class="abs" style="left:575px;top:364px;width:150px;height:24px;background:#f0f0f0"></div>
<div class="abs" style="left:575px;top:394px;width:150px;height:24px;background:#f0f0f0"></div>
<div class="abs" style="left:575px;top:425px;width:150px;height:24px;background:#f0f0f0"></div>
<div class="abs" style="left:614.500px;top:250px;font-size:13.700px;color:#555;white-space:nowrap">Configuración del documento</div>
<div class="abs" style="left:606px;top:280px;font-size:13.700px;color:#555;white-space:nowrap">Vistas guardadas</div>
<div class="abs" style="left:689px;top:338px;font-size:14px;color:#555">s</div>
<div class="abs" style="left:689px;top:368px;font-size:14px;color:#555">s</div>
<div class="abs" style="left:689px;top:398px;font-size:14px;color:#555">s</div>
<div class="abs" style="left:684px;top:429px;font-size:14px;color:#555">ar</div>
<div class="abs" style="left:575px;top:455px;width:150px;height:24px;background:#f0f0f0"></div>
<svg class="abs" style="left:552px;top:459px" width="13" height="18"><use href="#tri"/></svg><svg class="abs" style="left:579px;top:462px" width="20" height="12"><use href="#eye"/></svg><svg class="abs" style="left:610px;top:458px" width="22" height="20"><use href="#bx"/></svg><svg class="abs" style="left:641px;top:457px" width="22" height="21"><use href="#wrn"/></svg><div class="abs" style="left:679.500px;top:460px;font-size:13.700px;color:#555;white-space:nowrap">cara</div>
<div class="abs" style="left:575px;top:484px;width:150px;height:24px;background:#f0f0f0"></div>
<svg class="abs" style="left:552px;top:488px" width="13" height="18"><use href="#tri"/></svg><svg class="abs" style="left:579px;top:491px" width="20" height="12"><use href="#eye"/></svg><svg class="abs" style="left:610px;top:487px" width="22" height="20"><use href="#bx"/></svg><svg class="abs" style="left:641px;top:486px" width="22" height="21"><use href="#wrn"/></svg><div class="abs" style="left:679.500px;top:489px;font-size:13.700px;color:#555;white-space:nowrap">Trasera</div>
<div class="abs" style="left:575px;top:514px;width:150px;height:24px;background:#f0f0f0"></div>
<svg class="abs" style="left:552px;top:518px" width="13" height="18"><use href="#tri"/></svg><svg class="abs" style="left:579px;top:521px" width="20" height="12"><use href="#eye"/></svg><svg class="abs" style="left:610px;top:517px" width="22" height="20"><use href="#bx"/></svg><svg class="abs" style="left:641px;top:516px" width="22" height="21"><use href="#wrn"/></svg><div class="abs" style="left:679.500px;top:519px;font-size:13.700px;color:#555;white-space:nowrap">cara</div>
<div class="abs" style="left:575px;top:544px;width:150px;height:24px;background:#f0f0f0"></div>
<svg class="abs" style="left:552px;top:548px" width="13" height="18"><use href="#tri"/></svg><svg class="abs" style="left:579px;top:551px" width="20" height="12"><use href="#eye"/></svg><svg class="abs" style="left:610px;top:547px" width="22" height="20"><use href="#bx"/></svg><svg class="abs" style="left:641px;top:546px" width="22" height="21"><use href="#wrn"/></svg><div class="abs" style="left:679.500px;top:549px;font-size:13.700px;color:#555;white-space:nowrap">Frontal</div>
<div class="abs" style="left:575px;top:574px;width:150px;height:24px;background:#f0f0f0"></div>
<svg class="abs" style="left:552px;top:578px" width="13" height="18"><use href="#tri"/></svg><svg class="abs" style="left:579px;top:581px" width="20" height="12"><use href="#eye"/></svg><svg class="abs" style="left:610px;top:577px" width="22" height="20"><use href="#bx"/></svg><svg class="abs" style="left:641px;top:576px" width="22" height="21"><use href="#wrn"/></svg><div class="abs" style="left:679.500px;top:579px;font-size:13.700px;color:#555;white-space:nowrap">borrar</div>
<div class="abs" style="left:575px;top:604px;width:214px;height:24px;background:#f0f0f0"></div>
<svg class="abs" style="left:552px;top:608px" width="13" height="18"><use href="#tri"/></svg><svg class="abs" style="left:579px;top:611px" width="20" height="12"><use href="#eye"/></svg><svg class="abs" style="left:610px;top:607px" width="22" height="20"><use href="#bx"/></svg><svg class="abs" style="left:641px;top:606px" width="22" height="21"><use href="#wrn"/></svg><div class="abs" style="left:679.500px;top:609px;font-size:13.700px;color:#555;white-space:nowrap">cara diseño v1:1</div>
<!-- MENU -->
<div class="abs" style="left:518px;top:159px;width:173px;height:308px;background:#fff;border:1px solid #858585"></div>
<div class="abs" style="left:519px;top:252px;width:171px;height:35px;background:#d5d5d5"></div>
<div class="mi" style="top:181px">DISEÑO</div><div class="ms" style="top:203px"></div>
<div class="mi" style="top:225px">DISEÑO GENERATIVO</div><div class="ms" style="top:247px"></div>
<div class="mi" style="top:269px">RENDERIZAR</div><div class="ms" style="top:290px"></div>
<div class="mi" style="top:313px">ANIMACIÓN</div><div class="ms" style="top:334px"></div>
<div class="mi" style="top:357px;left:535px">SIMULACIÓN</div><div class="ms" style="top:378px"></div>
<div class="mi" style="top:400px">FABRICACIÓN</div><div class="ms" style="top:422px"></div>
<div class="mi" style="top:444px;letter-spacing:0">DIBUJO</div>
<div class="abs" style="left:675px;top:438px;border-top:6px solid transparent;border-bottom:6px solid transparent;border-left:7px solid #222"></div>
<!-- TOOLTIP -->
<div class="abs" style="left:699px;top:252px;width:416px;height:343px;background:#505050;border-radius:12px"></div>
<div class="abs" style="left:717px;top:258px;font-size:13px;font-weight:bold;color:#fff;white-space:nowrap">Renderizar Espacio de trabajo</div>
<div class="abs" style="left:717px;top:283px;font-size:13px;font-weight:bold;color:#fff;white-space:nowrap">Genera renderizaciones realistas del diseño.</div>
<svg class="abs" style="left:740px;top:320px" width="340" height="270" viewBox="740 320 340 270">
<defs>
<radialGradient id="kn" cx=".42" cy=".35" r=".75"><stop offset="0" stop-color="#a85038"/><stop offset=".45" stop-color="#7e3524"/><stop offset=".8" stop-color="#562014"/><stop offset="1" stop-color="#38140c"/></radialGradient>
<linearGradient id="knn" x1="0" y1="0" x2="1" y2="0"><stop offset="0" stop-color="#55200f"/><stop offset=".35" stop-color="#a04a33"/><stop offset=".7" stop-color="#7a3221"/><stop offset="1" stop-color="#401509"/></linearGradient>
<linearGradient id="mt" x1="0" y1="0" x2="1" y2="1"><stop offset="0" stop-color="#5a5a5a"/><stop offset=".25" stop-color="#9a9a9a"/><stop offset=".5" stop-color="#6a6a6a"/><stop offset=".75" stop-color="#a4a4a4"/><stop offset="1" stop-color="#6a6a6a"/></linearGradient>
<linearGradient id="post" x1="0" y1="0" x2="1" y2="0"><stop offset="0" stop-color="#555"/><stop offset=".3" stop-color="#e2e2e2"/><stop offset=".55" stop-color="#8a8a8a"/><stop offset=".8" stop-color="#c4c4c4"/><stop offset="1" stop-color="#4a4a4a"/></linearGradient>
</defs>
<!-- base silhouette -->
<defs><linearGradient id="bs" x1="0" y1="0" x2="0" y2="1"><stop offset="0" stop-color="#9a9a9a"/><stop offset=".5" stop-color="#7c7c7c"/><stop offset="1" stop-color="#5e5e5e"/></linearGradient>
<linearGradient id="pl" x1="0" y1="0" x2="1" y2="1"><stop offset="0" stop-color="#d0d0d0"/><stop offset=".35" stop-color="#8e8e8e"/><stop offset=".7" stop-color="#b4b4b4"/><stop offset="1" stop-color="#6e6e6e"/></linearGradient>
<linearGradient id="ar" x1="0" y1="0" x2="1" y2="0"><stop offset="0" stop-color="#8a8a8a"/><stop offset=".45" stop-color="#e6e6e6"/><stop offset="1" stop-color="#9c9c9c"/></linearGradient></defs>
<path d="M777 420Q776 440 786 452Q791 460 786 472L785 492L808 513V497Q812 484 821 483Q830 484 834 495L843 515L851 538L874 548L918 546L960 543L990 556Q1004 568 1016 560Q1026 552 1024 538L1020 528L960 490L935 470L920 455L880 425L840 415L800 414Z" fill="url(#bs)"/>
<!-- recess -->
<path d="M792 438L835 424L875 448L915 478L950 498L992 524L965 538L915 528L875 521L855 500L838 482L800 470Z" fill="#2b2826"/>
<path d="M793 440L812 450L806 470L800 470Z" fill="#4a3d3a"/>
<!-- plate right of arch -->
<path d="M846 497L858 528L874 540L930 538L962 535L958 520L930 502L900 508L872 512L856 500Z" fill="url(#pl)"/>
<!-- arch -->
<path d="M809 498Q812 489 822 488Q832 490 838 505V514L809 513Z" fill="#4c4c4c"/>
<path d="M803 494Q806 478 822 476Q838 478 846 497L858 528L849 533L838 505Q832 490 822 488Q812 489 809 498Z" fill="url(#ar)"/>
<!-- cutter bar -->
<path d="M866 499L898 476L905 483L873 506Z" fill="#dcdcdc"/><path d="M866 499L873 506L871 509L864 502Z" fill="#8a8a8a"/>
<!-- label plate -->
<path d="M926 492L940 486L978 508L966 520Z" fill="#161616" stroke="#b0b0b0" stroke-width=".9"/>
<!-- screw -->
<ellipse cx="914" cy="515" rx="9" ry="5" fill="#b0b0b0" stroke="#4a4a4a" stroke-width="1"/><ellipse cx="914" cy="515.500" rx="4" ry="2.300" fill="#4a4a4a"/>
<ellipse cx="829" cy="467" rx="4.500" ry="2.800" fill="#c8c8c8"/>
<!-- highlights -->
<path d="M778.500 422Q778 440 788 452Q793 460 788 472L787 490" fill="none" stroke="#d4d4d4" stroke-width="1.600"/>
<path d="M853 529L874 541L918 539L960 536L990 549Q1004 558 1014 552Q1021 546 1021.500 538" fill="none" stroke="#dcdcdc" stroke-width="1.600"/>
<path d="M922 458Q940 482 968 487" fill="none" stroke="#c8c8c8" stroke-width="1.500"/>
<path d="M926 466Q942 488 966 493" fill="none" stroke="#6a6a6a" stroke-width="1.500"/>
<!-- collar -->
<ellipse cx="903" cy="447" rx="33" ry="17" fill="#6a6a6a"/><ellipse cx="903" cy="444" rx="33" ry="16" fill="#a8a8a8"/><ellipse cx="901" cy="442" rx="24" ry="11" fill="#1e1e1e"/>
<path d="M872 448Q900 470 934 446L930 456Q902 474 878 458Z" fill="#3a3a3a"/>
<!-- wing -->
<path d="M920 428L940 418L946 424L926 436Z" fill="#bdbdbd"/>
<ellipse cx="945" cy="421" rx="11.500" ry="7" fill="#ececec" stroke="#9a9a9a" stroke-width="1.500" transform="rotate(25 945 421)"/>
<!-- small knurled -->
<ellipse cx="832" cy="446" rx="13" ry="7" fill="#a5a5a5" stroke="#555" stroke-width="1.200" transform="rotate(-18 832 446)"/>
<!-- posts -->
<rect x="847" y="393" width="16" height="60" fill="url(#post)"/><ellipse cx="855" cy="393" rx="8" ry="3.800" fill="#e8e8e8"/><ellipse cx="855" cy="392.500" rx="5" ry="2.200" fill="#222"/>
<path d="M838 452L872 446V476L852 484L838 474Z" fill="url(#post)"/>
<rect x="889" y="386" width="17" height="54" fill="url(#post)"/><ellipse cx="897.500" cy="386" rx="8.500" ry="4" fill="#f2f2f2"/><ellipse cx="897" cy="385" rx="5.500" ry="2.300" fill="#2a2a2a"/>
<ellipse cx="914" cy="384" rx="12.500" ry="6" fill="#c8c8c8" stroke="#777" stroke-width="1"/>
<rect x="908" y="372" width="11" height="54" fill="url(#post)"/><ellipse cx="913.500" cy="372" rx="5.500" ry="2.500" fill="#f4f4f4"/><rect x="910.500" y="367" width="6" height="6" rx="2" fill="#cfcfcf"/>
<!-- knob 1 -->
<ellipse cx="801.500" cy="426" rx="24.500" ry="11.500" fill="#8e8e8e"/><path d="M777 426Q778 436 801.500 437.500Q825 436 826 426" fill="none" stroke="#cfcfcf" stroke-width="1.300"/>
<path d="M789 408Q779 412 779.500 420.500Q780 431.500 801.500 432.500Q823 431.500 823.500 420.500Q824 412 816 408Z" fill="url(#knn)"/>
<path d="M770.500 367C770.500 350 783 342 799.500 342C816 342 828.700 350 828.700 367C828.700 382 819 392 816.500 402Q815.500 408 817.500 412L787.500 412Q789.500 408 788.500 402C786 392 770.500 382 770.500 367Z" fill="url(#kn)"/>
<path d="M787.500 411Q801 415.500 817.500 411" fill="none" stroke="#3a140b" stroke-width="1.600" opacity=".7"/>
<ellipse cx="799" cy="348" rx="7.500" ry="3.800" fill="#15100e"/>
<path d="M808 350Q822 357 823.500 378" fill="none" stroke="#f0c4b4" stroke-width="2.400" opacity=".5"/>
<path d="M776 356Q780 348 788 346" fill="none" stroke="#e8b8a8" stroke-width="1.600" opacity=".4"/>
<path d="M808 424Q816 424 819 419" fill="none" stroke="#f0c4b4" stroke-width="2" opacity=".55"/>
<!-- knob 2 -->
<ellipse cx="996.500" cy="540" rx="28.500" ry="14" fill="#8a8a8a"/><path d="M968 541Q969 553 996.500 554.500Q1024 553 1025 541" fill="none" stroke="#c8c8c8" stroke-width="1.400"/>
<path d="M981 517Q970 522 970.700 533Q971.500 548.500 996.200 550Q1021 548.500 1021.700 533Q1022.300 522 1013 517Z" fill="url(#knn)"/>
<path d="M967.200 478C967.200 459 982 448.200 1000.400 448.200C1019 448.200 1033.600 459 1033.600 478C1033.600 495 1022 505 1017 512Q1014 517 1015 521.500L979.500 521.500Q981 517 980 512C977 505 967.200 495 967.200 478Z" fill="url(#kn)"/>
<path d="M979.500 520.500Q996 526 1015 520.500" fill="none" stroke="#3a140b" stroke-width="1.800" opacity=".7"/>
<ellipse cx="1002.500" cy="454.600" rx="9" ry="4.800" fill="#15100e"/>
<path d="M1013 458Q1027 467 1028.500 492" fill="none" stroke="#f0c4b4" stroke-width="2.800" opacity=".5"/>
<path d="M973 466Q978 456 988 453" fill="none" stroke="#e8b8a8" stroke-width="1.800" opacity=".4"/>
<path d="M1004 540Q1014 540 1018 533" fill="none" stroke="#f0c4b4" stroke-width="2.400" opacity=".55"/>
</svg>

<!-- VIEWCUBE -->
<svg class="abs" style="left:1790px;top:195px" width="130" height="110" viewBox="1790 195 130 110">
<defs><radialGradient id="vsh" cx=".5" cy=".5" r=".5"><stop offset="0" stop-color="#000" stop-opacity=".38"/><stop offset=".6" stop-color="#000" stop-opacity=".15"/><stop offset="1" stop-color="#000" stop-opacity="0"/></radialGradient>
<linearGradient id="vf" x1="0" y1="0" x2="0" y2="1"><stop offset="0" stop-color="#f3f3f3"/><stop offset="1" stop-color="#dddddd"/></linearGradient></defs>
<ellipse cx="1848" cy="281" rx="42" ry="16" fill="url(#vsh)"/>
<path d="M1819 209.300L1870.500 206.700L1881.700 230.200L1820.600 233.700Z" fill="#f2f2f2"/>
<path d="M1820.600 233.700L1881.700 230.200L1878.600 278.500L1824.100 284.700Z" fill="url(#vf)"/>
<rect x="1833" y="229" width="38" height="13" fill="#e6e8ec" opacity=".8"/>
<path d="M1819 209.300L1870.500 206.700L1881.700 230.200L1820.600 233.700M1881.700 230.200L1878.600 278.500L1824.100 284.700" fill="none" stroke="#6a6a6a" stroke-width=".9" stroke-dasharray="7 3.500"/>
<text x="1851.600" y="263.500" font-family="Liberation Sans" font-size="10.300" font-weight="bold" fill="#999" text-anchor="middle" transform="rotate(-3 1851 259)" style="letter-spacing:.2px">FRONTAL</text>
<text x="1848" y="0" font-family="Liberation Sans" font-size="9.600" font-weight="bold" fill="#a5a5a5" text-anchor="middle" transform="translate(0 223.500) scale(1 .55) rotate(-3 1848 0)">SUPERIOR</text>
<path d="M1819.500 225.600L1824.100 284.700" stroke="#3a3acc" stroke-width="2.400"/>
<path d="M1824.100 284.700L1887.800 279" stroke="#e05050" stroke-width="2.400"/>
<path d="M1819 243L1820.500 252" stroke="#7fe87f" stroke-width="2"/>
<text x="1815" y="223" font-family="Liberation Sans" font-size="15" font-weight="bold" fill="#8888ff">Z</text>
<text x="1890" y="284" font-family="Liberation Sans" font-size="15" fill="#ff7a7a">X</text>
</svg>
<!-- COMMENTS -->
<div class="abs" style="left:508px;top:931px;width:375px;height:31px;background:#f0f0f0;border:1px solid #c8c8c8"></div>
<div class="abs" style="left:539px;top:939px;font-size:12.300px;color:#555;white-space:nowrap">COMENTARIOS</div>
<svg class="abs" style="left:855px;top:939px" width="30" height="16" viewBox="0 0 30 16"><circle cx="7.500" cy="7.500" r="5.800" fill="#1a1a1a"/><rect x="4" y="6.600" width="7" height="1.800" fill="#f0f0f0"/><rect x="6.600" y="4" width="1.800" height="7" fill="#f0f0f0"/><path d="M22.800 2V13" stroke="#444" stroke-width="1.200"/><path d="M25 3.500V11.500" stroke="#999" stroke-width="1"/></svg>
<!-- NAV BAR -->
<div class="abs" style="left:1063px;top:933px;width:296px;height:30px;background:#f0f0f0"></div>
<div class="abs" style="left:1063px;top:933px;width:41px;height:30px;background:#0696d7"></div>
<svg class="abs" style="left:1063px;top:933px" width="296" height="30" viewBox="1063 933 296 30">
<!-- orbit -->
<path d="M1076.700 939V956" stroke="#fff" stroke-width="2.200"/><path d="M1076.700 936.500L1080.200 941.500H1073.200Z" fill="#fff"/><ellipse cx="1076.700" cy="949" rx="8.500" ry="3.500" fill="none" stroke="#333" stroke-width="1.400"/><path d="M1069.500 952.500L1074 950V955Z" fill="#222"/><path d="M1076.700 939V956" stroke="#fff" stroke-width="1.600"/>
<path d="M1093 945.500H1100.500L1096.700 950Z" fill="#fff"/>
<!-- look at -->
<path d="M1109 957V945.500H1127.300V957Z" fill="#e8e8e8" stroke="#444" stroke-width="1.400"/><rect x="1112.500" y="949" width="11.500" height="5" fill="#9aa" stroke="#444" stroke-width="1"/><path d="M1112 945L1118 939.500V943L1124.500 940V945" fill="#ddd" stroke="#555" stroke-width="1"/>
<!-- hand -->
<path d="M1144.500 949L1142 945.500Q1141 943.500 1143 943.500Q1144.500 944 1146 947V939.500Q1146.800 938 1148 939.500V945V937.800Q1149 936.500 1150.200 937.800V945V938.500Q1151.300 937.200 1152.500 938.500V945.500V940.500Q1153.800 939.500 1154.700 940.500V950Q1154.700 955 1152 957.500H1146.500Q1145 954 1144.500 949Z" fill="#fff" stroke="#333" stroke-width="1.100" stroke-linejoin="round"/>
<!-- zoom -->
<circle cx="1179.500" cy="947" r="5.300" fill="#dfeaf0" stroke="#444" stroke-width="1.400"/><path d="M1183.500 951L1188 956" stroke="#333" stroke-width="2.600" stroke-linecap="round"/><path d="M1188 938.500H1193M1190.500 936V941M1188 944.500H1193" stroke="#333" stroke-width="1.100"/>
<!-- zoom window -->
<rect x="1205.500" y="939" width="19" height="18" fill="none" stroke="#444" stroke-width="1" stroke-dasharray="3 2"/><circle cx="1214" cy="946" r="8" fill="#e8f0f2" stroke="#444" stroke-width="1.400"/><path d="M1219.500 952L1224 957" stroke="#333" stroke-width="2.800" stroke-linecap="round"/>
<path d="M1231.500 945.500H1239L1235.300 950Z" fill="#333"/>
<!-- display -->
<rect x="1247.500" y="939" width="18.500" height="14" rx="1" fill="#e8e8e8" stroke="#444" stroke-width="1.300"/><rect x="1250" y="941.500" width="13.500" height="9" fill="#8aa9d8" stroke="#4a6aa0" stroke-width=".8"/><path d="M1254 953V956H1260V953M1252 957H1262" stroke="#444" stroke-width="1.200" fill="none"/>
<path d="M1269.500 945.500H1277L1273.300 950Z" fill="#333"/>
<!-- grid -->
<rect x="1285.500" y="938.500" width="19" height="18.500" fill="#fff" stroke="#444" stroke-width="1.200"/><path d="M1289.300 938.500V957M1293.100 938.500V957M1296.900 938.500V957M1300.700 938.500V957M1285.500 942.200H1304.500M1285.500 945.900H1304.500M1285.500 949.600H1304.500M1285.500 953.300H1304.500" stroke="#666" stroke-width="1"/><rect x="1286" y="949.600" width="18" height="7" fill="#667" opacity=".45"/>
<path d="M1308 945.500H1315.500L1311.700 950Z" fill="#333"/>
<!-- viewports -->
<rect x="1324.500" y="939.500" width="8" height="7.500" rx="1" fill="#a9bde0" stroke="#3a5a9a" stroke-width="1.200"/><rect x="1334" y="939.500" width="8" height="7.500" rx="1" fill="#a9bde0" stroke="#3a5a9a" stroke-width="1.200"/><rect x="1324.500" y="948.500" width="8" height="7.500" rx="1" fill="#a9bde0" stroke="#3a5a9a" stroke-width="1.200"/><rect x="1334" y="948.500" width="8" height="7.500" rx="1" fill="#a9bde0" stroke="#3a5a9a" stroke-width="1.200"/>
<path d="M1346.500 945.500H1354L1350.300 950Z" fill="#333"/>
</svg>
<!-- TIMELINE -->
<div id="tl" class="abs"></div>
<svg class="abs" style="left:504px;top:970px" width="1416" height="60" viewBox="504 970 1416 60">
<defs>
 <g id="lk"><path d="M0.500 5.500L4.500 0.800H20V14.500L16 19.500H0.500Z" fill="#d4d4d4" stroke="#777" stroke-width="1"/><path d="M0.500 5.500H16V19.500M16 5.500L20 0.800" fill="none" stroke="#777" stroke-width="1"/><ellipse cx="7.500" cy="12.500" rx="4.500" ry="2.600" transform="rotate(-35 7.500 12.500)" fill="none" stroke="#8a8a8a" stroke-width="1.500"/><ellipse cx="12" cy="9" rx="4.500" ry="2.600" transform="rotate(-35 12 9)" fill="none" stroke="#8a8a8a" stroke-width="1.500"/></g>
 <g id="jt"><path d="M0.800 18V6L4 1.500Q6 0.300 8 1.500V8.500L5.500 9V15L1.500 18.500Z" fill="#cfcfcf" stroke="#777" stroke-width="1" stroke-linejoin="round"/><path d="M14 2.500L19 6.500V18.800L14 15L11 14.500Q10.300 11 11 8.500L14 8Z" fill="#cfcfcf" stroke="#777" stroke-width="1" stroke-linejoin="round"/><path d="M7 11V14M12.500 5V8.500" stroke="#2a8fe0" stroke-width="1.500"/></g>
</defs>
<g fill="#444">
<rect x="516" y="991.500" width="2.800" height="17.500"/><path d="M531.500 991.500V1009L519.500 1000.200Z"/>
<path d="M558 992V1008.500L546.500 1000.200Z"/><rect x="560" y="996.500" width="2.700" height="7.500"/>
<path d="M579 990.500V1010L593.500 1000.200Z"/>
<rect x="608.700" y="996.500" width="2.700" height="7.500"/><path d="M613.500 992V1008.500L625 1000.200Z"/>
<path d="M641 991.500V1009L653 1000.200Z"/><rect x="653.700" y="991.500" width="2.800" height="17.500"/>
</g>
<rect x="680" y="983.700" width="30" height="30" rx="2.500" fill="#e4e41f"/>
<path d="M684.800 1002H696.500L700.300 999V1003.500L696.500 1007H684.800Z" fill="#c9c9a0"/><path d="M684.800 992.500H696.500V1002.500H684.800Z" fill="#5aa7e0"/><path d="M684.800 992.500L688 989H700.300L696.500 992.500Z" fill="#8ecbf8"/><path d="M696.500 992.500L700.300 989V999L696.500 1002.500Z" fill="#3d86c4"/><path d="M703.200 992V1004" stroke="#222" stroke-width="1.400"/><path d="M703.200 989.500L705.500 993.500H700.900Z" fill="#222"/>
<path d="M695.300 1013.700V1020H1146V1012.500" fill="none" stroke="#cbcbcb" stroke-width="1.500"/>
<path d="M725.200 1012.500V1020M755.200 1012.500V1020M785.200 1012.500V1020M815.200 1012.500V1020M845.200 1012.500V1020M875.200 1012.500V1020M905.200 1012.500V1020M935.200 1012.500V1020M965.200 1012.500V1020M995.200 1012.500V1020M1025.200 1012.500V1020M1055.200 1012.500V1020M1085.200 1012.500V1020M1115.200 1012.500V1020" stroke="#cbcbcb" stroke-width="1.500"/>
<use href="#lk" x="715" y="989"/><use href="#jt" x="745" y="989"/><use href="#lk" x="775" y="989"/><use href="#jt" x="805" y="989"/><use href="#lk" x="835" y="989"/><use href="#jt" x="865" y="989"/><use href="#lk" x="895" y="989"/><use href="#jt" x="925" y="989"/><use href="#lk" x="955" y="989"/><use href="#jt" x="985" y="989"/><use href="#lk" x="1015" y="989"/><use href="#jt" x="1045" y="989"/><use href="#lk" x="1075" y="989"/><use href="#jt" x="1105" y="989"/>
<!-- sketch icon -->
<rect x="1136.500" y="990" width="16" height="16" fill="none" stroke="#555" stroke-width="1" stroke-dasharray="5 2.500"/>
<g fill="#1e90ea"><rect x="1135" y="988.500" width="3" height="3"/><rect x="1151" y="988.500" width="3" height="3"/><rect x="1135" y="1004.500" width="3" height="3"/></g>
<path d="M1146 1006.500L1152.500 999.500L1155 1002L1148.500 1008.500L1145.500 1009Z" fill="#f0b84a"/><path d="M1152.500 999.500L1153.800 998.200Q1155 997.500 1156 998.800L1155 1002Z" fill="#e84a4a"/>
<!-- marker -->
<path d="M1152.500 981.500H1167.500V984.500L1161.300 991V1021H1158.700V991L1152.500 984.500Z" fill="#555"/>
<!-- gear -->
<g transform="translate(1893.500 1000)"><g fill="#8c8c8c"><circle r="7.200"/><g id="g2"><rect x="-2.100" y="-10" width="4.200" height="4.500" rx=".7"/></g><use href="#g2" transform="rotate(45)"/><use href="#g2" transform="rotate(90)"/><use href="#g2" transform="rotate(135)"/><use href="#g2" transform="rotate(180)"/><use href="#g2" transform="rotate(225)"/><use href="#g2" transform="rotate(270)"/><use href="#g2" transform="rotate(315)"/></g><circle r="3.200" fill="#f0f0f0"/></g>
</svg>
<!-- TASKBAR -->
<div id="tb" class="abs"></div>
<div class="abs" style="left:61px;top:1030px;width:429px;height:50px;background:#3c3c3c;border:1px solid #565656;border-bottom:none"></div>
<div class="abs" style="left:110px;top:1044px;font-size:18.400px;color:#e4e4e4;white-space:nowrap;letter-spacing:0">Escribe aquí para buscar</div>
<div class="abs" style="left:1050px;top:1030px;width:61px;height:50px;background:#333"></div>
<svg class="abs" style="left:0;top:1030px" width="1920" height="50" viewBox="0 1030 1920 50">
<!-- start -->
<g fill="#fff"><path d="M20 1047.700L28.300 1046.500V1054.400H20Z"/><path d="M29.500 1046.300L40.200 1044.800V1054.400H29.500Z"/><path d="M20 1055.600H28.300V1063.500L20 1062.300Z"/><path d="M29.500 1055.600H40.200V1065.200L29.500 1063.700Z"/></g>
<circle cx="89" cy="1052.700" r="6.400" fill="none" stroke="#fff" stroke-width="1.500"/><path d="M84.500 1057.500L75.500 1066.500" stroke="#fff" stroke-width="1.600"/>
<!-- task view -->
<g fill="none" stroke="#fff" stroke-width="1.400"><rect x="510.500" y="1049.500" width="12.500" height="9.500"/><path d="M509.500 1046H524M509.500 1062.500H524M528 1045.500V1049M528 1052V1058M528 1060.500V1064"/></g>
<!-- explorer -->
<path d="M570 1044.500Q570 1042.800 571.500 1042.800H580L582.500 1045.500H596Q597.800 1045.500 597.800 1047V1064Q597.800 1065.500 596 1065.500H571.500Q570 1065.500 570 1064Z" fill="#f4b400"/><path d="M570 1048.500H597.800V1064Q597.800 1065.500 596 1065.500H571.500Q570 1065.500 570 1064Z" fill="#ffd75e"/><path d="M575.500 1065.500V1057.500Q575.500 1056 577 1056H590.500Q592 1056 592 1057.500V1065.500H588V1060.500H579.500V1065.500Z" fill="#3a8fde"/>
<!-- office -->
<path d="M634.500 1047L648 1041.500L657 1044V1066L648 1068.800L634.500 1063.500L648 1061.500V1048L640 1050V1059.500L634.500 1062Z" fill="#e2401c"/><path d="M648 1041.500L657 1044V1066L648 1068.800Z" fill="#f0622a"/>
<!-- mail -->
<path d="M693 1050L708 1041L723 1050V1068.500H693Z" fill="#1572c8"/><path d="M696 1050H720V1060H696Z" fill="#fff"/><path d="M693 1051.500L708 1061L723 1051.500V1068.500H693Z" fill="#28a8ea"/><path d="M693 1068.500L708 1061L723 1068.500Z" fill="#1e90dc"/>
<!-- spotify -->
<circle cx="770.200" cy="1055" r="14.500" fill="#1ed760"/><g fill="none" stroke="#101010" stroke-linecap="round"><path d="M761.500 1050.500Q771 1047.500 779.500 1052" stroke-width="2.800"/><path d="M762.500 1055.500Q771 1053 778 1057" stroke-width="2.300"/><path d="M763.500 1060Q770.500 1058 776.500 1061.300" stroke-width="1.900"/></g>
<!-- opera -->
<circle cx="831.500" cy="1055" r="13.500" fill="none" stroke="#e01a4a" stroke-width="2.200"/><ellipse cx="829.500" cy="1055" rx="6.500" ry="11" fill="none" stroke="#e01a4a" stroke-width="2.200"/>
<!-- chrome -->
<circle cx="893.500" cy="1054" r="13.500" fill="#e33b2e"/><path d="M893.500 1054L881.800 1047.300A13.500 13.500 0 0 0 893.500 1067.500Z" fill="#2da94f"/><path d="M893.500 1054L893.500 1067.500A13.500 13.500 0 0 0 905.200 1047.300Z" fill="#fbbd05"/><path d="M881.800 1047.300A13.500 13.500 0 0 1 905.200 1047.300L893.500 1054Z" fill="#e33b2e"/><circle cx="893.500" cy="1054" r="6.200" fill="#fff"/><circle cx="893.500" cy="1054" r="4.800" fill="#4a8af4"/><circle cx="901" cy="1062" r="9.500" fill="#000"/>
<!-- teams -->
<circle cx="957" cy="1045.500" r="4.500" fill="#5b5fc7"/><circle cx="966.500" cy="1047" r="3.200" fill="#5b5fc7"/><path d="M950 1051H964Q965 1051 965 1052V1060Q965 1066 957.500 1066Q950 1066 950 1060Z" fill="#7b83eb"/><path d="M962 1052H970Q971 1052 971 1053V1059Q971 1063 966.500 1063H962Z" fill="#5b5fc7"/><rect x="940.500" y="1046.500" width="15.500" height="15.500" rx="1.500" fill="#4b53bc"/><path d="M944.500 1050.500H952M948.200 1050.500V1059" stroke="#fff" stroke-width="1.800"/><circle cx="965.500" cy="1064" r="5.800" fill="#fff"/><circle cx="965.500" cy="1064" r="4.800" fill="#6bb700"/><path d="M963 1064L965 1066L968 1062.300" fill="none" stroke="#fff" stroke-width="1.300"/>
<!-- snip -->
<path d="M1009 1048Q1012 1041 1020 1040.500Q1030 1042 1030.500 1051Q1030 1058 1025 1060" fill="none" stroke="#d83b1e" stroke-width="3"/><path d="M1019.500 1041V1056" stroke="#fff" stroke-width="2.600"/><path d="M1019 1055L1011 1061M1020.500 1055L1025 1063" stroke="#ccc" stroke-width="1.600"/><circle cx="1009.500" cy="1062.500" r="2.800" fill="none" stroke="#1e8fea" stroke-width="2"/><circle cx="1023.500" cy="1066" r="2.800" fill="none" stroke="#1e8fea" stroke-width="2"/>
<!-- fusion -->
<rect x="1065" y="1040" width="30.300" height="29.700" rx="1" fill="#f7e3cd"/><path d="M1074 1045H1088V1050H1079.500V1053.500H1086V1058H1079.500V1065H1074Z" fill="#e8862c"/><path d="M1074 1045H1077.500V1065H1074Z" fill="#c9641c"/><text x="1085" y="1068" font-family="Liberation Sans" font-size="5.500" font-weight="bold" fill="#f08a30">360</text>
<!-- underlines -->
<g fill="#d895ea"><rect x="559" y="1077" width="51" height="3"/><rect x="869" y="1077" width="51" height="3"/><rect x="931" y="1077" width="51" height="3"/><rect x="993" y="1077" width="51" height="3"/><rect x="1050" y="1077" width="61" height="3"/></g>
<!-- tray -->
<rect x="1508.700" y="1043" width="61" height="23" fill="#000" stroke="#fff" stroke-width="1.800"/><rect x="1570" y="1049" width="2.500" height="12" fill="#fff"/><rect x="1511" y="1045.200" width="10.500" height="18.600" fill="#f5a81c"/>
<text x="1539" y="1061.500" font-family="Liberation Sans" font-size="17" fill="#fff" text-anchor="middle">24%</text>
<path d="M1604.500 1059.500L1612 1052L1619.500 1059.500" fill="none" stroke="#fff" stroke-width="1.400"/>
<path d="M1632.500 1052.500H1635.500L1639.500 1049V1062.500L1635.500 1059H1632.500Z" fill="none" stroke="#fff" stroke-width="1.200" stroke-linejoin="round"/><path d="M1642.500 1053Q1644.500 1055.800 1642.500 1058.500M1645.500 1051Q1648.500 1055.800 1645.500 1060.500" fill="none" stroke="#fff" stroke-width="1.200"/><path d="M1648.800 1048.500Q1652.800 1055.800 1648.800 1063" fill="none" stroke="#888" stroke-width="1.200"/>
<g fill="none" stroke="#fff" stroke-width="1.200"><rect x="1666.500" y="1048" width="15.500" height="11"/><path d="M1674 1059V1062.500M1670 1062.500H1678"/><rect x="1662.500" y="1047" width="4" height="5.500"/><path d="M1664.500 1052.500V1062"/></g>
<rect x="1693.700" y="1051" width="16.500" height="9.500" fill="none" stroke="#fff" stroke-width="1.200"/><rect x="1710.500" y="1054" width="1.500" height="3.500" fill="#fff"/><rect x="1695.200" y="1052.500" width="3.500" height="6.500" fill="#fff"/>
<text x="1739.500" y="1060.500" font-family="Liberation Sans" font-size="13.200" fill="#fff" text-anchor="middle">ESP</text>
<text x="1808" y="1048.500" font-family="Liberation Sans" font-size="14" fill="#fff" text-anchor="middle">20:40</text>
<text x="1808" y="1072" font-family="Liberation Sans" font-size="14.800" fill="#fff" text-anchor="middle">31/03/2022</text>
<path d="M1869.500 1045.200H1889.800V1058.500H1877L1873 1062.500V1058.500H1869.500Z" fill="#fff"/><path d="M1872.500 1048.500H1887M1872.500 1051.700H1887M1872.500 1054.900H1883" stroke="#101010" stroke-width="1"/>
<circle cx="1888.600" cy="1064.800" r="9.500" fill="#2a2a2a" stroke="#6a6a6a" stroke-width="1.300"/><text x="1888.600" y="1070" font-family="Liberation Sans" font-size="14" fill="#fff" text-anchor="middle">1</text>
<path d="M1914.500 1030V1080" stroke="#5a5a5a" stroke-width="1"/>
</svg>
</div></body></html>
